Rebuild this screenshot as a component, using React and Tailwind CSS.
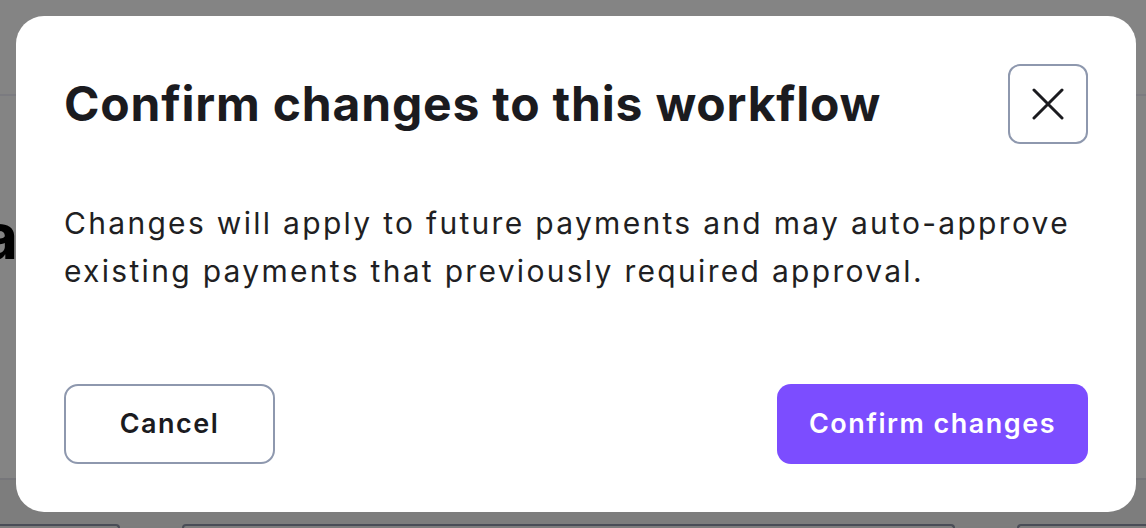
export default function App() {
  return (
    <div className="relative w-full h-[528px] overflow-hidden bg-[#848484]" style={{ fontFamily: 'Inter, "Open Sans", sans-serif' }}>
      {/* dimmed page underneath */}
      <div className="flex flex-col h-full">
        <div className="h-[96px] shrink-0 border-b-2 border-[#7b7b80]" />
        <div className="flex-1 flex items-start pt-[108px]">
          <span className="-ml-[19px] text-[64px] leading-none font-bold text-black">a</span>
        </div>
        <div className="h-[50px] shrink-0 border-t-2 border-[#76767a] bg-[#7d7d7d] flex items-end gap-[62px]">
          <div className="w-[120px] h-[4px] border-t-2 border-r-2 border-[#4a4d57] rounded-tr-[10px]" />
          <div className="w-[773px] h-[4px] border-t-2 border-x-2 border-[#4a4d57] rounded-t-[10px]" />
          <div className="flex-1 h-[4px] border-t-2 border-l-2 border-[#4a4d57] rounded-tl-[10px]" />
        </div>
      </div>

      {/* modal */}
      <div className="absolute left-[16px] top-[16px] w-[1120px] h-[496px] bg-white rounded-[28px] p-12 flex flex-col">
        <div className="flex items-center justify-between">
          <h1 className="text-[48px] leading-none font-bold text-[#1b1b1f] tracking-[0.8px]">Confirm changes to this workflow</h1>
          <button className="w-20 h-20 rounded-[12px] border-2 border-[#8e98ae] flex items-center justify-center">
            <svg width="32" height="32" viewBox="0 0 32 32" fill="none">
              <path d="M2 2L30 30M30 2L2 30" stroke="#1b1b1f" strokeWidth="3" strokeLinecap="round" />
            </svg>
          </button>
        </div>
        <p className="mt-[55px] text-[30px] leading-[48px] text-[#1f1f23] tracking-[2.3px]">
          Changes will apply to future payments and may auto-approve<br />existing payments that previously required approval.
        </p>
        <div className="mt-auto flex items-center justify-between">
          <button className="w-[211px] h-20 rounded-[14px] border-2 border-[#8e98ae] text-[27px] font-semibold text-[#1b1b1f] tracking-[1.5px]">Cancel</button>
          <button className="w-[311px] h-20 rounded-[14px] bg-[#7c4dff] text-[27px] font-semibold text-white tracking-[1.5px]">Confirm changes</button>
        </div>
      </div>
    </div>
  );
}
